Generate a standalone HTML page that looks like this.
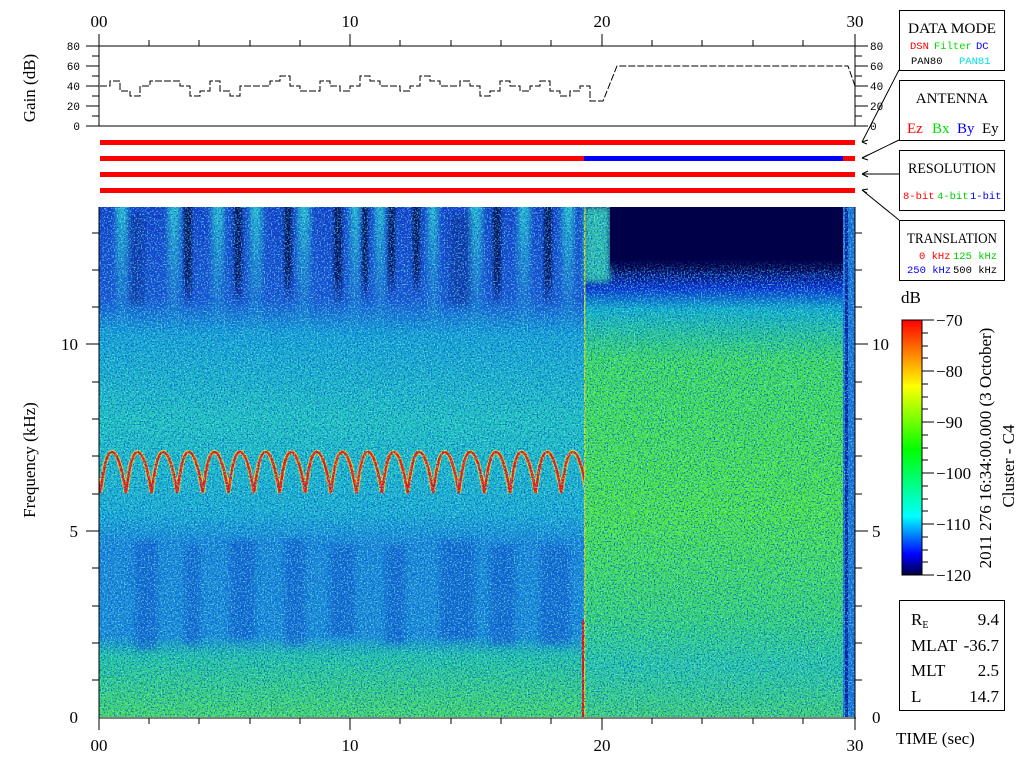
<!DOCTYPE html>
<html><head><meta charset="utf-8"><style>
html,body{margin:0;padding:0;background:#fff;width:1024px;height:768px;overflow:hidden}
svg{display:block}
.ax{font-family:"Liberation Serif",serif;font-size:17px;fill:#000}
.sm{font-family:"Liberation Mono",monospace;font-size:11px;fill:#000}
.bx{font-family:"Liberation Serif",serif;font-size:15px}
.mo{font-family:"Liberation Mono",monospace;font-size:10.5px}
</style></head><body>
<svg width="1024" height="768" viewBox="0 0 1024 768" xmlns="http://www.w3.org/2000/svg">
<defs>
<linearGradient id="gl" x1="0" y1="207" x2="0" y2="717" gradientUnits="userSpaceOnUse">
<stop offset="0" stop-color="#1438c8"/><stop offset="0.18" stop-color="#1a50d4"/>
<stop offset="0.25" stop-color="#14a0d4"/><stop offset="0.42" stop-color="#20c4bc"/>
<stop offset="0.6" stop-color="#18acd0"/><stop offset="0.66" stop-color="#1a84d8"/>
<stop offset="0.84" stop-color="#1a88d8"/><stop offset="0.88" stop-color="#22c4a0"/>
<stop offset="1" stop-color="#48dc58"/></linearGradient>
<linearGradient id="gr" x1="0" y1="207" x2="0" y2="717" gradientUnits="userSpaceOnUse">
<stop offset="0.12" stop-color="#000050"/><stop offset="0.16" stop-color="#0828d0"/>
<stop offset="0.2" stop-color="#10b0c8"/><stop offset="0.3" stop-color="#40e050"/>
<stop offset="0.6" stop-color="#50e838"/><stop offset="0.8" stop-color="#38d868"/>
<stop offset="0.9" stop-color="#28c8a0"/><stop offset="1" stop-color="#40d468"/></linearGradient>
<linearGradient id="ds" x1="0" y1="0" x2="0" y2="1">
<stop offset="0" stop-color="#000a50"/><stop offset="0.7" stop-color="#000a60"/><stop offset="1" stop-color="#000a60" stop-opacity="0"/></linearGradient>
<linearGradient id="cs" x1="0" y1="0" x2="0" y2="1">
<stop offset="0" stop-color="#28c8d0"/><stop offset="1" stop-color="#28c8d0" stop-opacity="0"/></linearGradient>
<linearGradient id="nv" x1="0" y1="0" x2="0" y2="1">
<stop offset="0.8" stop-color="#000048"/><stop offset="1" stop-color="#000048" stop-opacity="0"/></linearGradient>
<linearGradient id="cb" x1="0" y1="575" x2="0" y2="320" gradientUnits="userSpaceOnUse">
<stop offset="0" stop-color="#000040"/><stop offset="0.08" stop-color="#0000ff"/>
<stop offset="0.23" stop-color="#00ffff"/><stop offset="0.49" stop-color="#00ff00"/>
<stop offset="0.74" stop-color="#ffff00"/><stop offset="0.87" stop-color="#ff8000"/>
<stop offset="1" stop-color="#ff0000"/></linearGradient>
<filter id="bl" x="-20%" y="-20%" width="140%" height="140%"><feGaussianBlur stdDeviation="3"/></filter>
<filter id="bs" x="-20%" y="-20%" width="140%" height="140%"><feGaussianBlur stdDeviation="1.2"/></filter>
<filter id="nz" x="0" y="0" width="100%" height="100%">
<feTurbulence type="fractalNoise" baseFrequency="0.7" numOctaves="1" seed="3"/>
<feColorMatrix type="matrix" values="0 0 0 0 0  0 0 0 0 0.1  0 0 0 0 0.6  7 0 0 0 -3.6"/>
</filter>
<filter id="nz2" x="0" y="0" width="100%" height="100%">
<feTurbulence type="fractalNoise" baseFrequency="0.7" numOctaves="1" seed="11"/>
<feColorMatrix type="matrix" values="0 0 0 0 0.2  0 0 0 0 0.95  0 0 0 0 0.8  0 7 0 0 -3.7"/>
</filter>
<pattern id="wv" patternUnits="userSpaceOnUse" x="99.4" y="440" width="25.6" height="60">
<path d="M-24.6,53 C-21.6,30 -18.6,12 -13,12 C-7.6,12 -2.6,30 1,53 M1,53 C4,30 7,12 12.6,12 C18,12 23,30 26.6,53" fill="none" stroke="#f0e020" stroke-width="4.5"/>
<path d="M-24.6,53 C-21.6,30 -18.6,12 -13,12 C-7.6,12 -2.6,30 1,53 M1,53 C4,30 7,12 12.6,12 C18,12 23,30 26.6,53" fill="none" stroke="#ff1000" stroke-width="2.6"/>
</pattern>
<clipPath id="sp"><rect x="99" y="207" width="756" height="510"/></clipPath>
</defs>

<g class="ax" text-anchor="middle"><text x="99" y="27">00</text><text x="350" y="27">10</text><text x="602" y="27">20</text><text x="855" y="27">30</text></g>
<path d="M99,34V46M350,34V46M602,34V46M855,34V46M149,40V46M199,40V46M250,40V46M300,40V46M400,40V46M451,40V46M501,40V46M551,40V46M652,40V46M702,40V46M753,40V46M803,40V46" stroke="#000"/>
<path d="M86,46H868M86,126H868M99,46V126M855,46V126" stroke="#000" fill="none"/>
<path d="M92,56H99M92,76H99M92,96H99M92,116H99M855,56H862M855,76H862M855,96H862M855,116H862M86,66H99M86,86H99M86,106H99M855,66H868M855,86H868M855,106H868" stroke="#000"/>
<g class="sm" text-anchor="end"><text x="80" y="50">80</text><text x="80" y="70">60</text><text x="80" y="90">40</text><text x="80" y="110">20</text><text x="80" y="130">0</text></g>
<g class="sm"><text x="870" y="50">80</text><text x="870" y="70">60</text><text x="870" y="90">40</text><text x="870" y="110">20</text><text x="870" y="130">0</text></g>
<text class="ax" transform="translate(35,88) rotate(-90)" text-anchor="middle" font-size="16">Gain (dB)</text>
<path d="M100,86 H110 V81 H120 V91 H130 V96 H140 V86 H150 V81 H180 V86 H190 V96 H200 V91 H210 V81 H220 V91 H230 V96 H240 V86 H270 V81 H280 V76 H290 V86 H300 V91 H320 V81 H330 V86 H340 V91 H350 V86 H360 V76 H370 V81 H380 V86 H400 V91 H410 V86 H420 V76 H430 V81 H440 V86 H460 V81 H470 V86 H480 V96 H490 V91 H500 V81 H510 V86 H520 V91 H530 V86 H540 V81 H550 V91 H560 V96 H570 V91 H580 V86 H590 V101 H603 L617,66 H848 L855,86" fill="none" stroke="#000" stroke-width="1" stroke-dasharray="7 2"/>

<rect x="100" y="140" width="755" height="5" fill="#ff0000"/>
<rect x="100" y="156" width="755" height="5" fill="#ff0000"/>
<rect x="584" y="156" width="259" height="5" fill="#0000ff"/>
<rect x="100" y="172" width="755" height="5" fill="#ff0000"/>
<rect x="100" y="188" width="755" height="5" fill="#ff0000"/>

<g clip-path="url(#sp)">
<rect x="99" y="207" width="485" height="510" fill="url(#gl)"/>
<g fill="url(#cs)" filter="url(#bl)"><rect x="116" y="200" width="12" height="137"/><rect x="168" y="200" width="12" height="137"/><rect x="212" y="200" width="12" height="137"/><rect x="250" y="200" width="12" height="137"/><rect x="298" y="200" width="12" height="137"/><rect x="350" y="200" width="10" height="137"/><rect x="375" y="200" width="10" height="137"/><rect x="428" y="200" width="10" height="137"/><rect x="470" y="200" width="12" height="137"/><rect x="518" y="200" width="12" height="137"/><rect x="562" y="200" width="12" height="137"/></g>
<g fill="url(#ds)" filter="url(#bs)"><rect x="184" y="200" width="8" height="107"/><rect x="234" y="200" width="8" height="107"/><rect x="284" y="200" width="8" height="102"/><rect x="334" y="200" width="8" height="107"/><rect x="362" y="200" width="6" height="102"/><rect x="388" y="200" width="7" height="97"/><rect x="413" y="200" width="7" height="97"/><rect x="493" y="200" width="8" height="107"/><rect x="544" y="200" width="8" height="107"/></g>
<g fill="#000a60" opacity="0.35" filter="url(#bl)"><rect x="130" y="215" width="14" height="90"/><rect x="450" y="215" width="20" height="90"/></g>
<g fill="#1050c8" opacity="0.55" filter="url(#bl)"><rect x="135" y="540" width="22" height="110"/><rect x="185" y="545" width="15" height="100"/><rect x="230" y="540" width="25" height="100"/><rect x="285" y="540" width="20" height="105"/><rect x="330" y="545" width="25" height="90"/><rect x="385" y="545" width="20" height="100"/><rect x="440" y="540" width="35" height="100"/><rect x="490" y="545" width="25" height="100"/><rect x="540" y="545" width="30" height="100"/></g>
<rect x="99" y="440" width="485" height="70" fill="url(#wv)"/>
<rect x="584" y="207" width="261" height="510" fill="url(#gr)"/>
<rect x="584" y="207" width="26" height="75" fill="#30c0a8" filter="url(#bl)"/>
<rect x="843" y="207" width="12" height="510" fill="#1a70d8"/>
<rect x="845" y="207" width="3" height="510" fill="#0020a0"/>
<rect x="584" y="207" width="1.5" height="510" fill="#c0e020"/>
<rect x="582" y="620" width="2" height="97" fill="#ff0000"/>
<rect x="99" y="207" width="756" height="510" filter="url(#nz)" opacity="0.8"/>
<rect x="99" y="207" width="756" height="510" filter="url(#nz2)" opacity="0.6"/>
<rect x="610" y="200" width="233" height="74" fill="url(#nv)"/>
</g>
<path d="M99,207V718M855,207V718M99,718H856" stroke="#000" fill="none"/>
<path d="M92,680H99M92,643H99M92,606H99M92,568H99M92,494H99M92,456H99M92,419H99M92,382H99M92,307H99M92,270H99M92,233H99M86,531H99M86,344H99M855,680H862M855,643H862M855,606H862M855,568H862M855,494H862M855,456H862M855,419H862M855,382H862M855,307H862M855,270H862M855,233H862M855,531H868M855,344H868" stroke="#000"/>
<path d="M99,718V730M350,718V730M602,718V730M855,718V730M149,718V724M199,718V724M250,718V724M300,718V724M400,718V724M451,718V724M501,718V724M551,718V724M652,718V724M702,718V724M753,718V724M803,718V724" stroke="#000"/>
<g class="ax" text-anchor="end"><text x="78" y="723">0</text><text x="78" y="537">5</text><text x="78" y="350">10</text></g>
<g class="ax"><text x="872" y="723">0</text><text x="872" y="537">5</text><text x="872" y="350">10</text></g>
<g class="ax" text-anchor="middle"><text x="99" y="751">00</text><text x="350" y="751">10</text><text x="602" y="751">20</text><text x="855" y="751">30</text></g>
<text class="ax" x="896" y="744" font-size="16">TIME (sec)</text>
<text class="ax" transform="translate(35,460) rotate(-90)" text-anchor="middle" font-size="16">Frequency (kHz)</text>

<g fill="#fff" stroke="#000"><rect x="899.5" y="10.5" width="105" height="60"/><rect x="899.5" y="80.5" width="105" height="60"/><rect x="899.5" y="150.5" width="105" height="60"/><rect x="899.5" y="220.5" width="105" height="60"/></g>
<path d="M899,70L862,142M899,140L862,158M899,174H862M899,220L862,190" stroke="#000" fill="none"/>
<path d="M862,142l6,-2M862,142l5,2M862,158l6,-3M862,158l6,2M862,174l6,-3M862,174l6,3M862,190l6,-1M862,190l5,3" stroke="#000"/>
<g class="bx" text-anchor="middle" fill="#000"><text x="952" y="33" textLength="88" lengthAdjust="spacingAndGlyphs">DATA MODE</text><text x="952" y="103">ANTENNA</text><text x="952" y="173" textLength="88" lengthAdjust="spacingAndGlyphs">RESOLUTION</text><text x="952" y="243" textLength="90" lengthAdjust="spacingAndGlyphs">TRANSLATION</text></g>
<g class="mo"><text x="910" y="49" fill="#ff0000">DSN</text><text x="934" y="49" fill="#00e000">Filter</text><text x="976" y="49" fill="#0000ff">DC</text>
<text x="911" y="64" fill="#000">PAN80</text><text x="959" y="64" fill="#00e0e0">PAN81</text>
<text x="903" y="199" fill="#ff0000">8-bit</text><text x="937" y="199" fill="#00d000">4-bit</text><text x="970" y="199" fill="#0000ff">1-bit</text>
<text x="919" y="259" fill="#ff0000">0 kHz</text><text x="953" y="259" fill="#00d000">125 kHz</text>
<text x="907" y="273" fill="#0000ff">250 kHz</text><text x="953" y="273" fill="#000">500 kHz</text></g>
<g class="bx" font-size="16"><text x="907" y="133" fill="#ff0000">Ez</text><text x="932" y="133" fill="#00e000">Bx</text><text x="957" y="133" fill="#0000ff">By</text><text x="982" y="133" fill="#000">Ey</text></g>

<text class="ax" x="901" y="303" font-size="15">dB</text>
<rect x="902" y="320" width="20" height="255" fill="url(#cb)" stroke="#000"/>
<path d="M922,320H934M922,371H934M922,422H934M922,473H934M922,524H934M922,575H934M922,333H928M922,346H928M922,358H928M922,384H928M922,397H928M922,409H928M922,435H928M922,448H928M922,460H928M922,486H928M922,499H928M922,511H928M922,537H928M922,550H928M922,562H928" stroke="#000"/>
<g class="ax" font-size="16"><text x="936" y="326">−70</text><text x="936" y="377">−80</text><text x="936" y="428">−90</text><text x="936" y="479">−100</text><text x="936" y="530">−110</text><text x="936" y="581">−120</text></g>
<text class="ax" font-size="16" transform="translate(991,448) rotate(-90)" text-anchor="middle">2011 276 16:34:00.000 (3 October)</text>
<text class="ax" font-size="16" transform="translate(1014,466) rotate(-90)" text-anchor="middle">Cluster - C4</text>

<rect x="899.5" y="600.5" width="105" height="110" fill="#fff" stroke="#000"/>
<g class="ax" font-size="16"><text x="911" y="625">R<tspan font-size="10" dy="3">E</tspan></text><text x="911" y="651">MLAT</text><text x="911" y="676">MLT</text><text x="911" y="702">L</text></g>
<g class="ax" font-size="16" text-anchor="end"><text x="999" y="625">9.4</text><text x="999" y="651">-36.7</text><text x="999" y="676">2.5</text><text x="999" y="702">14.7</text></g>
</svg>
</body></html>
